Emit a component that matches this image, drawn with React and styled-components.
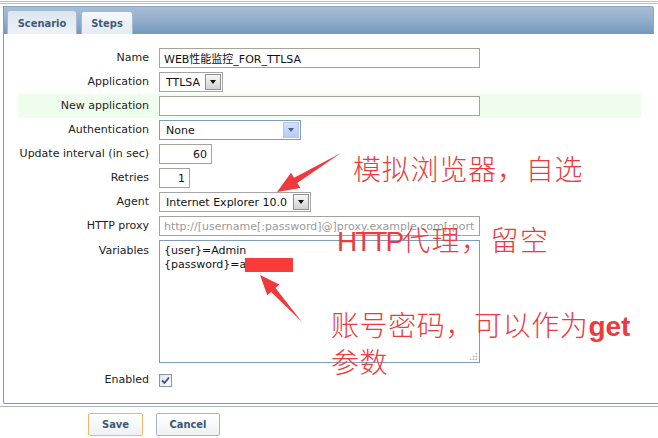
import React from "react";
import styled, { createGlobalStyle } from "styled-components";

const GlobalStyle = createGlobalStyle`
  body {
    margin: 0;
    background: #fff;
    font-family: "DejaVu Sans", "Noto Sans CJK SC", sans-serif;
    font-size: 11px;
    color: #1e1e1e;
  }
`;

const Page = styled.div`
  position: relative;
  width: 658px;
  height: 438px;
  overflow: hidden;
`;

const TopRule = styled.div`
  margin-top: 1px;
  height: 1px;
  border-top: 1px solid #b3c3d7;
  border-bottom: 1px solid #b3c3d7;
`;

const Panel = styled.div`
  margin: 2px 0 0 3px;
  border-left: 1px solid #7f9aba;
  border-bottom: 1px solid #7f9aba;
  border-bottom-left-radius: 2px;
`;

const TabBar = styled.div`
  height: 28px;
  margin-right: 4px;
  box-sizing: border-box;
  border: 1px solid #8ea5c1;
  border-left: none;
  border-bottom: none;
  border-radius: 0 3px 0 0;
  background: linear-gradient(#a8bed7, #90acca 55%, #7298bf);
  display: flex;
  align-items: flex-end;
  gap: 4px;
  padding-left: 3px;
`;

const Tab = styled.div`
  width: ${(p) => p.w}px;
  height: ${(p) => (p.active ? 24 : 23)}px;
  box-sizing: border-box;
  border: 1px solid #a6b9d0;
  border-bottom: none;
  border-radius: 3px 3px 0 0;
  background: ${(p) =>
    p.active
      ? "linear-gradient(#dce5ef, #edf2f7)"
      : "linear-gradient(#f6f8fb, #e4ebf3)"};
  color: #3f5a79;
  font-weight: bold;
  font-stretch: condensed;
  display: flex;
  align-items: center;
  justify-content: center;
  padding-top: 1px;
`;

const Form = styled.div`
  display: flex;
  flex-direction: column;
  padding: 12px 0 11px 14px;
`;

const Row = styled.div`
  width: 623px;
  display: grid;
  grid-template-columns: 131px 1fr;
  column-gap: 10px;
  align-items: ${(p) => (p.top ? "start" : "center")};
  min-height: 24px;
  padding: ${(p) => p.pad || "0"};
  box-sizing: border-box;
  background: ${(p) => (p.green ? "#effdec" : "transparent")};
`;

const Label = styled.div`
  text-align: right;
  white-space: nowrap;
  line-height: 14px;
  color: #222;
  padding-top: ${(p) => p.offset || 0}px;
`;

const TextInput = styled.input`
  width: ${(p) => p.w}px;
  height: 20px;
  box-sizing: border-box;
  border: 1px solid #a4a49c;
  padding: 0 4px;
  font: inherit;
  color: #111;
  text-align: ${(p) => (p.right ? "right" : "left")};
  outline: none;
  &::placeholder {
    color: #9a9a9a;
  }
`;

const AreaWrap = styled.div`
  position: relative;
  width: 321px;
  height: 123px;
`;

const Area = styled.textarea`
  width: 321px;
  height: 123px;
  box-sizing: border-box;
  border: 1px solid #7f9db9;
  padding: 3px 4px;
  font: inherit;
  line-height: 14px;
  color: #111;
  outline: none;
  resize: none;
  display: block;
`;

const Grip = styled.div`
  position: absolute;
  right: 3px;
  bottom: 3px;
  width: 8px;
  height: 8px;
  background-image: radial-gradient(circle, #b8b8b8 0.9px, transparent 1.1px);
  background-size: 3px 3px;
  clip-path: polygon(100% 0, 100% 100%, 0 100%);
`;

const SelectBox = styled.div`
  width: ${(p) => p.w}px;
  height: 20px;
  box-sizing: border-box;
  border: 1px solid ${(p) => (p.blue ? "#7f9db9" : "#a5a5a5")};
  background: #fff;
  display: flex;
`;

const SelectValue = styled.div`
  flex: 1;
  padding-left: 6px;
  display: flex;
  align-items: center;
  white-space: nowrap;
  overflow: hidden;
  color: #111;
`;

const DropButton = styled.div`
  width: 16px;
  margin: 1px;
  box-sizing: border-box;
  border: 1px solid ${(p) => (p.blue ? "#b2c6ee" : "#8e8e8e")};
  background: ${(p) =>
    p.blue
      ? "linear-gradient(#d3e0fb, #b6cbf6)"
      : "linear-gradient(#f7f7f7, #d2d2d2)"};
  display: flex;
  align-items: center;
  justify-content: center;
  &::after {
    content: "";
    border-style: solid;
    border-width: 4px 3.5px 0 3.5px;
    border-color: ${(p) => (p.blue ? "#4d6185" : "#111")} transparent
      transparent transparent;
  }
`;

const Check = styled.span`
  width: 13px;
  height: 13px;
  box-sizing: border-box;
  border: 1px solid #8397b3;
  background: linear-gradient(135deg, #dfe3ea, #fff);
  display: inline-flex;
  align-items: center;
  justify-content: center;
`;

const Footer = styled.div`
  margin-top: 2px;
  border-top: 1px solid #a3b5cb;
  padding: 6px 0 0 88px;
  display: flex;
  gap: 13px;
`;

const Button = styled.button`
  width: ${(p) => p.w}px;
  height: 23px;
  border: 1px solid ${(p) => (p.primary ? "#f1b767" : "#aab5c2")};
  border-radius: 2px;
  background: linear-gradient(#ffffff, #eef1f5);
  font: inherit;
  font-weight: bold;
  font-stretch: condensed;
  color: #3c5673;
  padding: 0;
`;

const Note = styled.div`
  position: absolute;
  left: ${(p) => p.x}px;
  top: ${(p) => p.y}px;
  color: #ec3a3d;
  font-family: "Noto Sans CJK SC", sans-serif;
  font-weight: 300;
  font-size: 28px;
  line-height: 34px;
  letter-spacing: ${(p) => p.spacing || 0}px;
  white-space: nowrap;
`;

const Latin = styled.span`
  font-family: "Liberation Sans", sans-serif;
  font-weight: ${(p) => (p.bold ? "bold" : "normal")};
  letter-spacing: ${(p) => p.spacing || 0}px;
`;

const Mask = styled.div`
  position: absolute;
  left: 245px;
  top: 258px;
  width: 48px;
  height: 14px;
  background: #fb3a3a;
`;

const Arrows = styled.svg`
  position: absolute;
  left: 0;
  top: 0;
  pointer-events: none;
`;

function Select({ w, blue, children }) {
  return (
    <SelectBox w={w} blue={blue}>
      <SelectValue>{children}</SelectValue>
      <DropButton blue={blue} />
    </SelectBox>
  );
}

export default function App() {
  return (
    <Page>
      <GlobalStyle />
      <TopRule />
      <Panel>
        <TabBar>
          <Tab w={70} active>
            Scenario
          </Tab>
          <Tab w={52}>Steps</Tab>
        </TabBar>
        <Form>
          <Row>
            <Label>Name</Label>
            <TextInput w={321} defaultValue="WEB性能监控_FOR_TTLSA" />
          </Row>
          <Row>
            <Label>Application</Label>
            <Select w={64}>TTLSA</Select>
          </Row>
          <Row green>
            <Label>New application</Label>
            <TextInput w={321} />
          </Row>
          <Row>
            <Label>Authentication</Label>
            <Select w={142} blue>
              None
            </Select>
          </Row>
          <Row>
            <Label>Update interval (in sec)</Label>
            <TextInput w={53} right defaultValue="60" />
          </Row>
          <Row>
            <Label>Retries</Label>
            <TextInput w={31} right defaultValue="1" />
          </Row>
          <Row>
            <Label>Agent</Label>
            <Select w={152}>Internet Explorer 10.0</Select>
          </Row>
          <Row>
            <Label>HTTP proxy</Label>
            <TextInput
              w={321}
              placeholder="http://[username[:password]@]proxy.example.com[:port]"
            />
          </Row>
          <Row top pad="2px 0 5px">
            <Label offset={4}>Variables</Label>
            <AreaWrap>
              <Area defaultValue={"{user}=Admin\n{password}=ad"} />
              <Grip />
            </AreaWrap>
          </Row>
          <Row>
            <Label>Enabled</Label>
            <Check>
              <svg width="9" height="9" viewBox="0 0 9 9">
                <path
                  d="M1 4.5 L3.5 7 L8 1.5"
                  fill="none"
                  stroke="#3b4f88"
                  strokeWidth="1.8"
                />
              </svg>
            </Check>
          </Row>
        </Form>
      </Panel>
      <Footer>
        <Button w={55} primary>
          Save
        </Button>
        <Button w={64}>Cancel</Button>
      </Footer>

      <Mask />
      <Note x={353} y={151} spacing={0.8}>
        模拟浏览器，自选
      </Note>
      <Note x={337} y={222} spacing={1.5}>
        <Latin spacing={-2}>HTTP</Latin>代理，留空
      </Note>
      <Note x={331} y={307} spacing={0.6}>
        账号密码，可以作为<Latin bold>get</Latin>
        <br />
        参数
      </Note>
      <Arrows width="658" height="438" viewBox="0 0 658 438">
        <polygon
          points="341,153 297.3,183 300.4,188.1 277,192 291,172.7 294.1,177.8"
          fill="#f0393c"
        />
        <polygon
          points="302,322 271.1,291.9 267.3,295.2 260,275 279.3,284.6 275.5,287.9"
          fill="#f0393c"
        />
      </Arrows>
    </Page>
  );
}
